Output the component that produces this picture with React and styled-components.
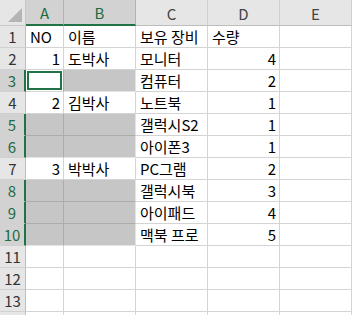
import React from 'react';
import styled, { createGlobalStyle } from 'styled-components';

const Global = createGlobalStyle`
  html, body { margin: 0; padding: 0; background: #fff; overflow: hidden; }
`;

const Sheet = styled.div`
  display: grid;
  grid-template-columns: 26px 38px 72px 72px 72px 72px;
  grid-template-rows: 26px;
  grid-auto-rows: 22px;
  width: 352px;
  height: 315px;
  overflow: hidden;
  font-family: "Noto Sans CJK KR", "Noto Sans", sans-serif;
  font-size: 15px;
  color: #000;
`;

const Corner = styled.div`
  box-sizing: border-box;
  background: #e6e6e6;
  border-right: 1px solid #c8c8c8;
  border-bottom: 1px solid #c8c8c8;
  display: flex;
  align-items: flex-end;
  justify-content: flex-end;
  padding: 0 3px 3px 0;
`;

const ColHead = styled.div`
  box-sizing: border-box;
  display: flex;
  align-items: center;
  justify-content: center;
  background: ${p => (p.$sel ? '#d2d2d2' : '#e6e6e6')};
  color: ${p => (p.$sel ? '#1d6b3f' : '#444')};
  border-right: 1px solid ${p => (p.$sel ? '#b2b2b2' : '#d0d0d0')};
  border-bottom: ${p => (p.$sel ? '2px solid #217346' : '1px solid #bdbdbd')};
  line-height: 1;
  padding-top: 1px;
`;

const RowHead = styled.div`
  box-sizing: border-box;
  display: flex;
  align-items: center;
  justify-content: center;
  background: ${p => (p.$sel ? '#d2d2d2' : '#e6e6e6')};
  color: ${p => (p.$sel ? '#1d6b3f' : '#333')};
  border-right: ${p => (p.$sel ? '2px solid #217346' : '1px solid #bdbdbd')};
  border-bottom: 1px solid #d0d0d0;
  line-height: 1;
`;

const Cell = styled.div`
  box-sizing: border-box;
  display: flex;
  align-items: center;
  justify-content: ${p => (p.$num ? 'flex-end' : 'flex-start')};
  padding: 0 3px 0 4px;
  white-space: nowrap;
  overflow: hidden;
  line-height: 1;
  background: #fff;
  border-right: 1px solid #d4d4d4;
  border-bottom: 1px solid #d4d4d4;
`;

const GrayCell = styled(Cell)`
  background: #c6c6c6;
  border-right-color: ${p => (p.$edgeR ? '#e4e4e4' : '#acacac')};
  border-bottom-color: ${p => (p.$edgeB ? '#e4e4e4' : '#acacac')};
`;

const ActiveCell = styled(Cell)`
  box-shadow: inset 0 0 0 1px #fff, inset 0 0 0 3px #217346;
  border-right-color: #acacac;
`;

const cols = ['A', 'B', 'C', 'D', 'E'];

const rows = [
  ['NO', '이름', '보유 장비', '수량'],
  [1, '도박사', '모니터', 4],
  ['active', 'gray', '컴퓨터', 2],
  [2, '김박사', '노트북', 1],
  ['gray', 'gray', '갤럭시S2', 1],
  ['gray', 'gray', '아이폰3', 1],
  [3, '박박사', 'PC그램', 2],
  ['gray', 'gray', '갤럭시북', 3],
  ['gray', 'gray', '아이패드', 4],
  ['gray', 'gray', '맥북 프로', 5],
  [], [], [], [],
];

const selRows = [3, 5, 6, 8, 9, 10];
const blockEnds = [3, 6, 10];

function renderCell(v, r, c) {
  const key = `${r}-${c}`;
  if (v === 'active') return <ActiveCell key={key} />;
  if (v === 'gray') {
    return <GrayCell key={key} $edgeR={c === 1} $edgeB={blockEnds.includes(r)} />;
  }
  if (v === undefined) return <Cell key={key} />;
  return <Cell key={key} $num={typeof v === 'number'}>{v}</Cell>;
}

export default function App() {
  return (
    <>
      <Global />
      <Sheet>
        <Corner>
          <svg width="14" height="14" viewBox="0 0 14 14">
            <polygon points="14,0 14,14 0,14" fill="#b4b4b4" />
          </svg>
        </Corner>
        {cols.map((c, i) => (
          <ColHead key={c} $sel={i < 2}>{c}</ColHead>
        ))}
        {rows.map((row, ri) => {
          const r = ri + 1;
          return (
            <React.Fragment key={r}>
              {/* 14행은 아래 끝에 3px만 걸쳐 보여서 번호는 생략 */}
              <RowHead $sel={selRows.includes(r)}>{r < 14 ? r : ''}</RowHead>
              {cols.map((_, ci) => renderCell(row[ci], r, ci))}
            </React.Fragment>
          );
        })}
      </Sheet>
    </>
  );
}
